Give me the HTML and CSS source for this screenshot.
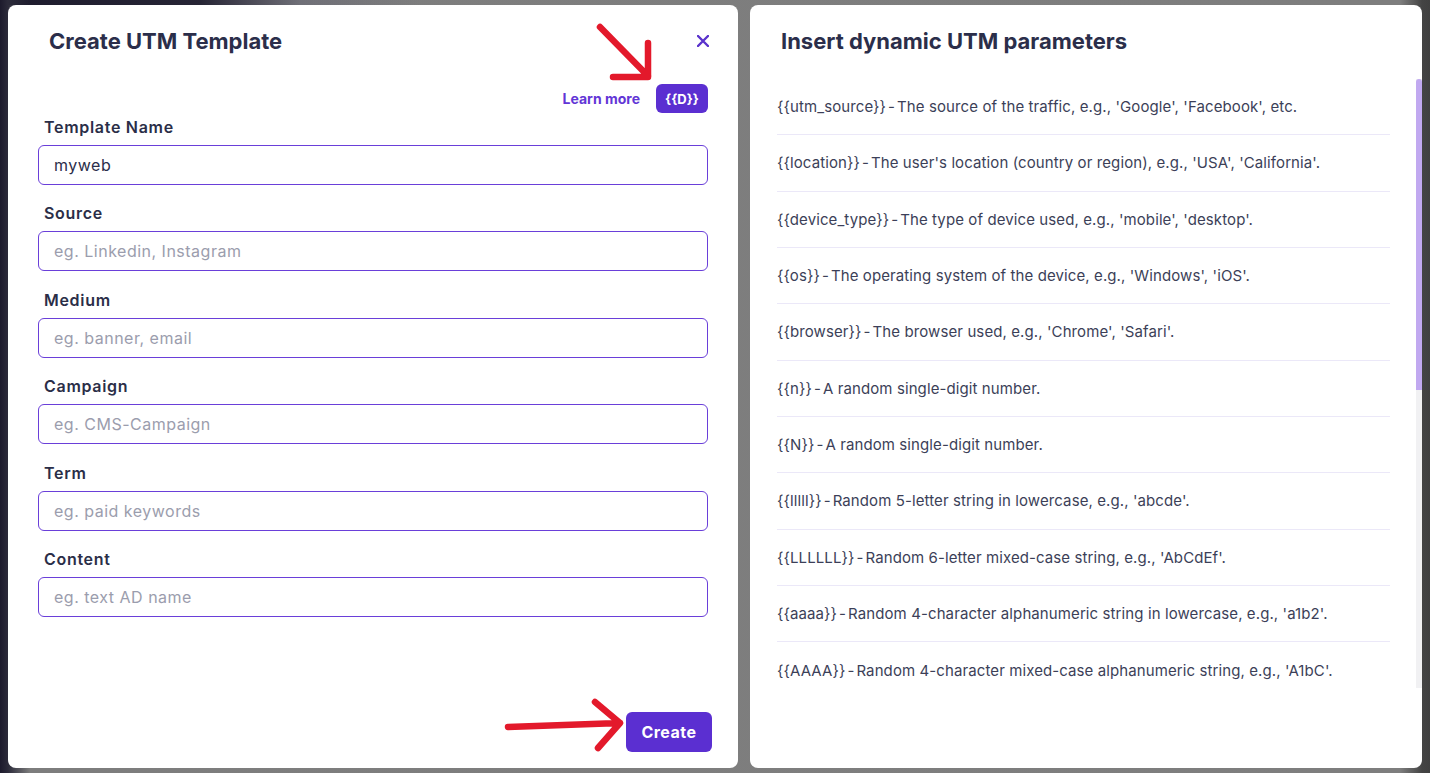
FILE: index.html
```html
<!DOCTYPE html>
<html lang="en">
<head>
<meta charset="utf-8">
<title>Create UTM Template</title>
<link rel="stylesheet" href="styles.css">
</head>
<body>
<div class="backdrop">
  <section class="panel panel-form">
    <header class="form-header">
      <h1 class="title">Create UTM Template</h1>
      <button class="close" aria-label="Close">
        <svg width="12" height="12" viewBox="0 0 12 12"><path d="M1 1 L11 11 M11 1 L1 11" stroke="#5a33cc" stroke-width="2.4" stroke-linecap="round" fill="none"/></svg>
      </button>
    </header>
    <div class="actions">
      <a class="learn">Learn more</a>
      <button class="dyn-btn">{{D}}</button>
    </div>
    <form class="form">
      <label class="field"><span class="label">Template Name</span><input class="input" value="myweb"></label>
      <label class="field"><span class="label">Source</span><input class="input" placeholder="eg. Linkedin, Instagram"></label>
      <label class="field"><span class="label">Medium</span><input class="input" placeholder="eg. banner, email"></label>
      <label class="field"><span class="label">Campaign</span><input class="input" placeholder="eg. CMS-Campaign"></label>
      <label class="field"><span class="label">Term</span><input class="input" placeholder="eg. paid keywords"></label>
      <label class="field"><span class="label">Content</span><input class="input" placeholder="eg. text AD name"></label>
    </form>
    <button class="create">Create</button>
    <svg class="arrow arrow-top" width="70" height="70" viewBox="0 0 70 70">
      <path d="M6 4 L54 53 M54 20 L54 54 L19 54" stroke="#e3192b" stroke-width="6.5" stroke-linecap="round" stroke-linejoin="round" fill="none"/>
    </svg>
    <svg class="arrow arrow-bottom" width="130" height="60" viewBox="0 0 130 60">
      <path d="M4 32 L116 28 M91 7 L116 28 L94 53" stroke="#e3192b" stroke-width="6.5" stroke-linecap="round" stroke-linejoin="round" fill="none"/>
    </svg>
  </section>

  <section class="panel panel-params">
    <h2 class="title params-title">Insert dynamic UTM parameters</h2>
    <div class="params-body">
      <ul class="params">
        <li class="param"><span class="tok">{{utm_source}}</span><span class="dash">-</span>The source of the traffic, e.g., 'Google', 'Facebook', etc.</li>
        <li class="param"><span class="tok">{{location}}</span><span class="dash">-</span>The user's location (country or region), e.g., 'USA', 'California'.</li>
        <li class="param"><span class="tok">{{device_type}}</span><span class="dash">-</span>The type of device used, e.g., 'mobile', 'desktop'.</li>
        <li class="param"><span class="tok">{{os}}</span><span class="dash">-</span>The operating system of the device, e.g., 'Windows', 'iOS'.</li>
        <li class="param"><span class="tok">{{browser}}</span><span class="dash">-</span>The browser used, e.g., 'Chrome', 'Safari'.</li>
        <li class="param"><span class="tok">{{n}}</span><span class="dash">-</span>A random single-digit number.</li>
        <li class="param"><span class="tok">{{N}}</span><span class="dash">-</span>A random single-digit number.</li>
        <li class="param"><span class="tok">{{lllll}}</span><span class="dash">-</span>Random 5-letter string in lowercase, e.g., 'abcde'.</li>
        <li class="param"><span class="tok">{{LLLLLL}}</span><span class="dash">-</span>Random 6-letter mixed-case string, e.g., 'AbCdEf'.</li>
        <li class="param"><span class="tok">{{aaaa}}</span><span class="dash">-</span>Random 4-character alphanumeric string in lowercase, e.g., 'a1b2'.</li>
        <li class="param"><span class="tok">{{AAAA}}</span><span class="dash">-</span>Random 4-character mixed-case alphanumeric string, e.g., 'A1bC'.</li>
      </ul>
      <div class="scrollbar"><div class="thumb"></div></div>
    </div>
  </section>
</div>
</body>
</html>
```

FILE: styles.css
```css
* { box-sizing: border-box; }

html, body {
  margin: 0;
  height: 773px;
  overflow: hidden;
}

body {
  font-family: "Inter", "Noto Sans", sans-serif;
  color: #2b2e4a;
  background:
    linear-gradient(90deg, #1c1a2c 0, #2c2b3a 8px, rgba(124,124,124,0) 30px),
    linear-gradient(90deg, rgba(29,27,45,1) 0, rgba(29,27,45,0.9) 200px, rgba(90,90,110,0.4) 300px, rgba(124,124,124,0) 420px) top left / 100% 5px no-repeat,
    linear-gradient(90deg, #7d7d7d 0, #7e7e7e 1400px, #444 1422px, #404040 100%);
}

.backdrop {
  display: flex;
  gap: 12px;
  padding: 5px 8px;
  height: 773px;
}

.panel {
  background: #ffffff;
  border-radius: 8px;
  height: 763px;
  position: relative;
  display: flex;
  flex-direction: column;
}

.panel-form { width: 730px; }
.panel-params { width: 672px; }

.title {
  margin: 0;
  font-size: 22px;
  line-height: 24px;
  font-weight: 700;
  color: #2b2e4a;
}

.form-header {
  display: flex;
  align-items: center;
  justify-content: space-between;
  padding: 24px 29px 0 41px;
}

.close {
  border: 0;
  background: none;
  padding: 0;
  width: 12px;
  height: 12px;
  display: flex;
}

.actions {
  display: flex;
  align-items: center;
  justify-content: flex-end;
  gap: 16px;
  padding: 0 30px 0 0;
  margin-top: 31px;
}

.learn {
  font-size: 14px;
  font-weight: 700;
  color: #6236d6;
}

.dyn-btn {
  width: 52px;
  height: 29px;
  border: 0;
  border-radius: 6px;
  background: #5b2fd1;
  color: #ffffff;
  font-family: inherit;
  font-size: 13px;
  font-weight: 700;
  padding: 0;
}

.form {
  display: flex;
  flex-direction: column;
  padding: 2px 30px 0 30px;
  gap: 16.4px;
}

.field {
  display: flex;
  flex-direction: column;
  gap: 6px;
}

.label {
  font-size: 16px;
  line-height: 24px;
  font-weight: 600;
  letter-spacing: 0.7px;
  color: #2b2e48;
  padding-left: 6px;
}

.input {
  height: 40px;
  border: 1.3px solid #6a3fd9;
  border-radius: 6px;
  padding: 0 15px;
  font-family: inherit;
  font-size: 16px;
  letter-spacing: 0.5px;
  color: #2b2e4a;
  outline: none;
}

.input::placeholder { color: #9b9dad; }

.create {
  margin-top: auto;
  margin-bottom: 16px;
  margin-right: 26px;
  align-self: flex-end;
  width: 86px;
  height: 40px;
  border: 0;
  border-radius: 6px;
  background: #5b2fd1;
  color: #ffffff;
  font-family: inherit;
  font-size: 16px;
  font-weight: 700;
  letter-spacing: 0.5px;
}

.arrow { position: absolute; }
.arrow-top { left: 586px; top: 18px; }
.arrow-bottom { left: 496px; top: 690px; }

.params-title {
  padding: 24px 31px 0 31px;
  height: 74px;
}

.params-body {
  display: flex;
  flex: 1;
  min-height: 0;
}

.params {
  list-style: none;
  margin: 0;
  padding: 0 0 0 27px;
  width: 640px;
}

.param {
  height: 56.33px;
  display: flex;
  align-items: center;
  border-bottom: 1px solid #ebe8f8;
  font-size: 15px;
  letter-spacing: 0.1px;
  color: #3c3f58;
  white-space: nowrap;
}

.param:last-child { border-bottom: 0; }

.dash { margin: 0 2px; }

.scrollbar {
  margin-left: auto;
  width: 6px;
  height: 609px;
  background: #f1f1f3;
}

.thumb {
  height: 311px;
  background: #c1a9f0;
  border-radius: 3px 3px 0 0;
}
```
